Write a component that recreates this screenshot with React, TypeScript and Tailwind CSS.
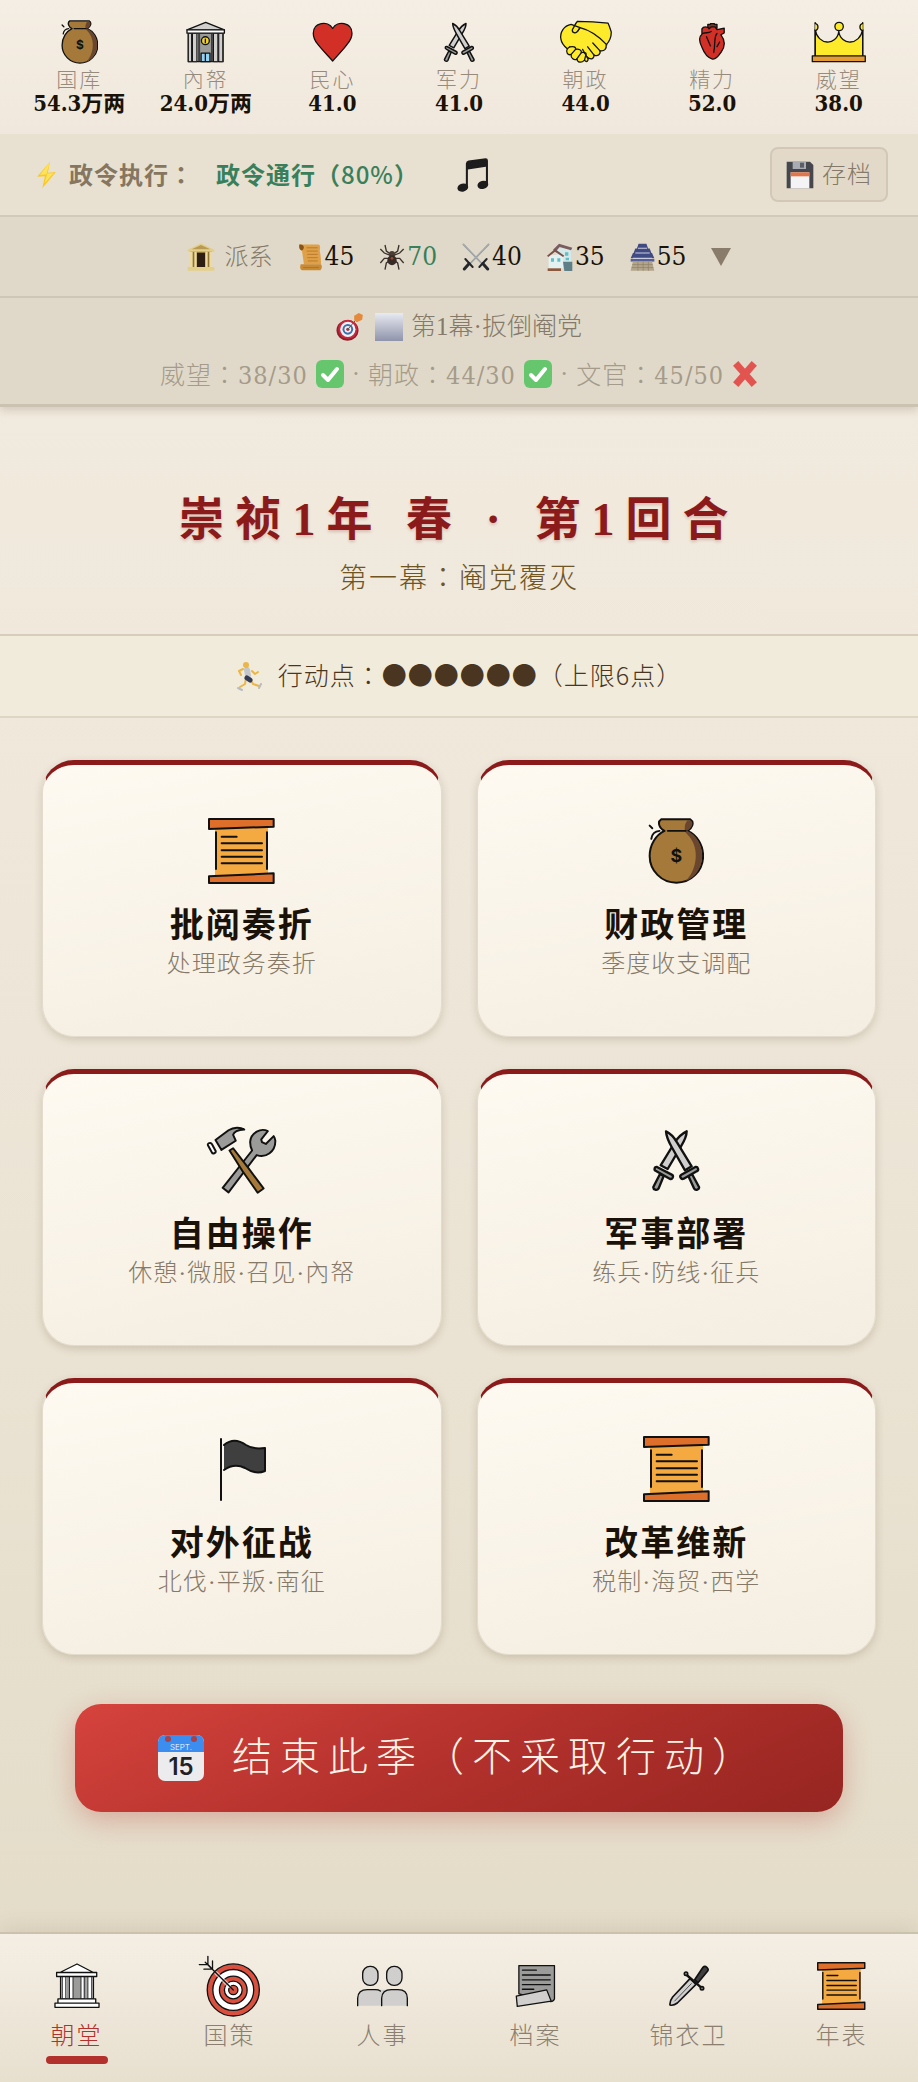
import type { ReactNode } from 'react';
import clsx from 'clsx';

const ink = {
  stroke: '#111',
  strokeWidth: 5,
  strokeLinecap: 'round' as const,
  strokeLinejoin: 'round' as const,
};

function MoneyBag({ className }: { className?: string }) {
  return (
    <svg viewBox="4 3 170 200" className={className} fill="none" {...ink} strokeWidth={6}>
      <path fill="#a57939" d="M54 42C40 36 30 16 44 7H132C146 16 138 34 124 42C152 54 171 84 171 118A81 81 0 0 1 9 118C9 84 28 54 54 42Z" />
      <path stroke="none" fill="#6a462f" d="M124 10H132C144 16 138 34 122 42C150 54 168 84 168 118C168 152 148 184 118 194C150 164 160 104 134 66C128 56 120 50 116 44C114 30 116 18 124 10Z" />
      <path d="M64 42H118M9 26L17 34M14 66C16 52 26 43 39 42" />
      <text x="90" y="137" textAnchor="middle" fontSize="54" fontWeight="700" fontFamily="Inter, sans-serif" fill="#111" stroke="none">$</text>
    </svg>
  );
}

function Bank({ className }: { className?: string }) {
  return (
    <svg viewBox="7 4 120 128" className={className} fill="none" {...ink} strokeWidth={4}>
      <path fill="#9b9b9a" d="M14 40H120V128H14Z" />
      <path fill="#d0cfce" d="M15 41H24V128H15ZM28 41H40V128H28ZM92 41H104V128H92ZM108 41H119V128H108Z" strokeWidth={3} />
      <path fill="#3f3f3f" stroke="none" d="M44 41H50V127H44ZM83 41H89V127H83Z" />
      <path fill="#d0cfce" d="M10 31L67 8L124 31Z" />
      <path fill="#fff" d="M10 31H124V41H10Z" />
      <circle cx="66" cy="64" r="12" fill="#f1d230" />
      <path d="M66 59V70" />
      <path fill="#92d3f5" d="M53 102H80V128H53ZM66 102V128" />
    </svg>
  );
}

function Heart({ className }: { className?: string }) {
  return (
    <svg viewBox="3 4 128 124" className={className} fill="#d22f27" {...ink} strokeWidth={4}>
      <path d="M67 125C52 108 34 90 20 72C10 60 7 50 7 39C7 6 52 -2 67 24C82 -2 127 6 127 39C127 50 123 60 113 72C100 90 82 108 67 125Z" />
    </svg>
  );
}

function CrossedSwords({ className }: { className?: string }) {
  return (
    <svg viewBox="4 6 150 186" className={className} {...ink} strokeWidth={7}>
      <path fill="#d0cfce" d="M111 13C111 26 104 42 94 58L54 126L33 115L74 48C84 32 96 20 111 13Z" />
      <path fill="#9b9b9a" d="M31 141L11 180C10 188 22 192 27 184L42 147Z" />
      <path fill="#9b9b9a" d="M22 120C14 118 12 130 19 132L60 155C68 159 74 147 66 143Z" />
      <path fill="#d0cfce" d="M49 13C64 20 74 32 82 46L126 118L106 130L66 60C56 42 50 30 49 13Z" />
      <path fill="#9b9b9a" d="M127 141L148 180C150 188 138 192 133 184L116 147Z" />
      <path fill="#9b9b9a" d="M137 120C145 118 149 130 141 133L102 155C94 159 88 147 95 143Z" />
    </svg>
  );
}

function Handshake({ className }: { className?: string }) {
  return (
    <svg viewBox="2 2 168 138" className={className} fill="#fcea2b" {...ink} strokeWidth={4}>
      <path d="M40 16C18 20 4 40 8 62C10 76 18 84 28 92C22 104 30 114 40 110C38 122 50 130 58 124C60 136 72 138 82 128C88 138 98 128 90 118C104 130 112 122 112 112C124 118 134 108 130 98C144 102 152 92 150 80C160 70 166 54 166 40C162 28 160 20 156 12C124 8 90 6 60 6C52 14 50 24 44 32C42 42 54 46 60 38L68 26Z" />
      <path d="M60 38L68 26C92 32 126 52 152 80M108 74L130 98M92 86L112 112M76 94L90 118M28 92L36 86M40 110L54 94M58 124L72 104M82 128L86 112" fill="none" />
      <path d="M36 86C46 84 56 86 54 94C64 92 74 96 72 104C82 102 90 106 86 112" fill="none" />
    </svg>
  );
}

function OrganHeart({ className }: { className?: string }) {
  return (
    <svg viewBox="4 2 86 116" className={className} fill="#d22f27" {...ink} strokeWidth={4}>
      <path d="M34 16V6H42V4H54V6H62V18Z" fill="#8c2a22" />
      <path d="M16 20C20 12 34 12 38 20L44 14H56L62 22L84 18V32L74 38C88 56 86 76 74 92C66 104 56 114 48 112C34 108 22 92 16 76C8 60 6 44 16 36Z" />
      <path d="M18 34C28 30 36 34 44 28M30 44L42 72M62 34C52 44 58 60 52 92M70 60L62 74" fill="none" />
    </svg>
  );
}

function Crown({ className }: { className?: string }) {
  return (
    <svg viewBox="0 2 172 130" className={className} fill="#fcea2b" {...ink} strokeWidth={4}>
      <path d="M13 112V28C20 78 80 80 86 34C92 80 152 78 160 28V112Z" />
      <path d="M13 7V112M160 7V112" />
      <circle cx="87" cy="19" r="13" />
      <path d="M13 9A12 12 0 0 1 13 32M160 9A12 12 0 0 0 160 32" />
      <path fill="#e59b33" d="M4 110H168V128H4Z" />
    </svg>
  );
}

function Scroll({ className }: { className?: string }) {
  return (
    <svg viewBox="7 5 200 198" className={className} fill="none" {...ink} strokeWidth={6}>
      <path stroke="none" fill="#f4a941" d="M28 30H187V182H28Z" />
      <path fill="#dd6f2a" d="M10 8H204V31L10 38ZM10 180L204 171V200H10Z" />
      <path d="M31 48V158M184 48V158M48 61H93M48 81H169M48 102H169M48 121H169M48 141H169" />
    </svg>
  );
}

function Tools({ className }: { className?: string }) {
  return (
    <svg viewBox="4 4 222 214" className={className} {...ink} strokeWidth={6}>
      <path fill="#9b9b9a" d="M196 23C176 12 144 26 142 56C142 66 144 74 148 82L58 196L76 210L162 96C190 106 220 86 219 52C218 46 216 40 214 38L190 62L178 56L176 48Z" />
      <path fill="#a57939" d="M79 82L90 75L134 132L183 198L165 211L118 144Z" />
      <path fill="#9b9b9a" d="M36 50L76 20C92 10 112 10 124 18C104 18 92 26 90 34L98 52L54 80Z" />
      <path fill="#fff" d="M13 66C10 60 22 56 25 62L37 84C38 90 28 94 25 88Z" />
    </svg>
  );
}

function Flag({ className }: { className?: string }) {
  return (
    <svg viewBox="0 0 66 66" className={className} fill="#3f3f3f" {...ink} strokeWidth={2}>
      <path d="M12 3V64" />
      <path d="M15 9C22 3 30 4 37 9C43 13 49 13 56 12V35C49 38 42 36 36 32C28 28 22 29 15 34" />
    </svg>
  );
}

function Temple({ className }: { className?: string }) {
  return (
    <svg viewBox="2 2 140 140" className={className} fill="#fff" {...ink} strokeWidth={4}>
      <path d="M22 42H122V112H22Z" />
      <path fill="#9b9b9a" stroke="none" d="M61 43H83V111H61ZM41 43H48V111H41ZM95 43H102V111H95Z" />
      <path d="M27 42V112M38 42V112M49 42V112M60 42V112M84 42V112M94 42V112M105 42V112M117 42V112" strokeWidth={3} />
      <path d="M20 31L72 5L122 31ZM10 31H132V43H10ZM14 111H129V124H14ZM5 124H139V137H5Z" />
    </svg>
  );
}

function Target({ className }: { className?: string }) {
  return (
    <svg viewBox="2 2 192 188" className={className} {...ink} strokeWidth={4}>
      <circle cx="109" cy="108" r="79" fill="#d9503f" />
      <circle cx="109" cy="108" r="62" fill="#fff" />
      <circle cx="109" cy="108" r="42" fill="#d9503f" />
      <circle cx="109" cy="108" r="27" fill="#fff" />
      <circle cx="109" cy="108" r="14" fill="#d9503f" />
      <path fill="none" stroke="#fff" strokeWidth={12} d="M58 58L96 96" opacity={0.6} />
      <path fill="none" d="M24 24L109 108M32 6V31L46 45V20M6 31H31L45 45H20" />
    </svg>
  );
}

function People({ className }: { className?: string }) {
  return (
    <svg viewBox="2 2 158 126" className={className} fill="#d0cfce" {...ink} strokeWidth={4}>
      <rect x="22" y="6" width="46" height="57" rx="22" />
      <rect x="94" y="6" width="46" height="57" rx="22" />
      <path stroke="none" d="M7 124V102Q8 76 36 76H128Q156 76 156 102V124Z" />
      <path fill="none" d="M7 124V102Q8 76 36 76H60Q70 76 75 80M79 124V102Q80 76 108 76H128Q156 76 156 102V124" />
    </svg>
  );
}

function Archive({ className }: { className?: string }) {
  return (
    <svg viewBox="4 4 128 136" className={className} fill="#9b9b9a" {...ink} strokeWidth={4}>
      <path d="M16 9H126V112Q124 120 114 120L16 96Z" />
      <path fill="none" d="M27 23H70M27 38H113M27 53H113M27 68H113M27 82H62" />
      <path fill="#d0cfce" d="M8 103L102 84L116 119L11 135Z" />
    </svg>
  );
}

function Dagger({ className }: { className?: string }) {
  return (
    <svg viewBox="2 4 126 126" className={className} {...ink} strokeWidth={5}>
      <path fill="#d0cfce" d="M68 45L86 62L30 118C22 124 14 126 8 124C7 116 10 108 16 100Z" />
      <path fill="none" strokeWidth={2} d="M72 60L22 112" />
      <path fill="#3f3f3f" d="M82 48L107 11C114 4 126 14 121 22L92 57Z" />
      <path fill="#9b9b9a" strokeWidth={7} d="M58 34L102 72" />
      <circle cx="56" cy="30" r="5" fill="#9b9b9a" />
      <circle cx="104" cy="74" r="5" fill="#9b9b9a" />
    </svg>
  );
}

function Bolt() {
  return (
    <svg viewBox="0 0 64 86" className="h-7 w-[21px]">
      <path fill="#fbc926" d="M43 2L3 48L27 47L19 84L61 34L36 36Z" />
      <path fill="#fde25a" d="M43 2L12 43L34 41L26 68L54 37L32 39Z" />
    </svg>
  );
}

function MusicNote() {
  return (
    <svg viewBox="0 0 94 100" className="h-[34px] w-8" fill="#1d1c1c">
      <path d="M26 16Q27 9 34 7L84 1Q91 1 91 8V80H85V26L32 34V86H26Z" />
      <ellipse cx="17" cy="87" rx="16" ry="12" transform="rotate(-15 17 87)" />
      <ellipse cx="76" cy="79" rx="16" ry="12" transform="rotate(-15 76 79)" />
    </svg>
  );
}

function Floppy() {
  return (
    <svg viewBox="0 0 84 84" className="size-7">
      <path fill="#45474c" d="M2 2H72L82 12V82H2Z" />
      <path fill="#a9adb3" d="M20 2H60V24H20Z" />
      <path fill="#5b5e64" d="M42 5H54V20H42Z" />
      <path fill="#f4f4f6" d="M14 34H70V82H14Z" />
      <path fill="#e2764a" d="M14 34H70V46H14Z" />
    </svg>
  );
}

function Courthouse() {
  return (
    <svg viewBox="0 0 84 84" className="size-7">
      <path fill="#e3cf8b" d="M2 20L42 1L82 20V26H2ZM2 72H82V83H2Z" />
      <path fill="#b89a52" d="M14 19L42 6L70 19Z" />
      <path fill="#8d7336" d="M9 26H75V72H9Z" />
      <path fill="#2d1d12" d="M30 30H54V72H30Z" />
      <path fill="#edda9c" d="M9 26H17V72H9ZM22 26H29V72H22ZM55 26H62V72H55ZM67 26H75V72H67Z" />
    </svg>
  );
}

function Parchment() {
  return (
    <svg viewBox="0 0 76 84" className="h-7 w-[25px]">
      <path fill="#e0a047" d="M4 4Q2 20 12 22L18 64H70Q70 40 66 22Q70 4 62 4Z" />
      <path fill="#8a5418" d="M4 4Q16 2 18 12Q16 22 10 22Q2 18 4 4Z" />
      <path fill="#c98a35" d="M8 64H70Q76 74 68 82H12Q4 80 8 64Z" />
      <path fill="none" stroke="#a56a22" strokeWidth="2" d="M26 14H60M26 24H60M28 34H60M28 44H60M30 54H60M16 74H64" />
    </svg>
  );
}

function Spider() {
  return (
    <svg viewBox="0 0 78 84" className="h-7 w-[26px]">
      <path fill="none" stroke="#3b322b" strokeWidth="4" d="M36 34L22 24L18 6M42 34L56 24L60 6M36 38L16 30L4 18M42 38L62 30L74 18M36 46L16 46L4 60M42 46L62 46L74 60M36 50L22 60L18 80M42 50L56 60L60 80" />
      <ellipse cx="39" cy="34" rx="9" ry="10" fill="#4b3d33" />
      <ellipse cx="39" cy="52" rx="14" ry="15" fill="#362b25" />
      <circle cx="39" cy="46" r="4" fill="#9a4a35" />
    </svg>
  );
}

function Blades() {
  return (
    <svg viewBox="0 0 84 84" className="size-7" fill="none" strokeLinecap="round">
      <path stroke="#8f969b" strokeWidth="5" d="M4 4L58 60M80 4L26 60" />
      <path stroke="#dde2e4" strokeWidth="1" d="M4 4L58 60M80 4L26 60" />
      <path stroke="#23272a" strokeWidth="6" d="M10 48L32 72M74 48L52 72" />
      <path stroke="#23272a" strokeWidth="9" d="M21 62L7 78M63 62L77 78" />
    </svg>
  );
}

function Houses() {
  return (
    <svg viewBox="0 0 78 84" className="h-7 w-[26px]">
      <path fill="#d6e9ea" d="M28 16H72V56H28Z" />
      <path fill="#7a5d60" d="M18 20L36 2L76 14L72 22L38 12L26 26Z" />
      <path fill="#e3f1f1" d="M5 36H48V76H5Z" />
      <path fill="#7b5149" d="M0 38L24 18L52 38L48 42L24 26L4 42Z" />
      <path fill="#61bfc5" d="M12 46H21V56H12ZM31 46H40V56H31ZM54 28H64V38H54ZM56 44H66V52H56Z" />
      <path fill="#8b5a3e" d="M2 76H42V84H2Z" />
      <path fill="#5f7f86" d="M48 56H76V84H52Z" />
    </svg>
  );
}

function Castle() {
  return (
    <svg viewBox="0 0 76 84" className="h-7 w-[25px]">
      <path fill="#404a82" d="M26 2H50L55 16H21ZM16 16H60L65 30H11ZM9 30H67L74 46H2Z" />
      <path fill="#c9cbe0" d="M24 14H52V17H24ZM16 28H60V31H16ZM9 44H67V49H9Z" />
      <path fill="#565f96" d="M2 48H74V56H2Z" />
      <path fill="#b3a58a" d="M9 56H67L74 84H2Z" />
      <path fill="none" stroke="#8d8068" strokeWidth="2" d="M7 65H69M5 74H71M24 56V84M40 56V84M56 56V84" />
    </svg>
  );
}

function Dart() {
  return (
    <svg viewBox="0 0 80 84" className="h-7 w-[27px]">
      <ellipse cx="34" cy="52" rx="33" ry="31" fill="#8f1d2b" />
      <circle cx="35" cy="49" r="29" fill="#c9273a" />
      <circle cx="35" cy="49" r="23" fill="#f2f2f4" />
      <circle cx="35" cy="49" r="16" fill="#3c6fae" />
      <circle cx="35" cy="49" r="10" fill="#f2f2f4" />
      <circle cx="35" cy="49" r="5" fill="#c9273a" />
      <path stroke="#5a5a5a" strokeWidth="3" d="M35 49L58 22" />
      <path fill="#e58a3a" d="M54 8L68 0L80 6L78 20L62 28L54 22Z" />
    </svg>
  );
}

function Check() {
  return (
    <svg viewBox="0 0 28 28" className="size-7 shrink-0">
      <rect width="28" height="28" rx="6" fill="#66c66e" />
      <path fill="none" stroke="#fff" strokeWidth="4" strokeLinecap="round" strokeLinejoin="round" d="M7 15L12 20L21 9" />
    </svg>
  );
}

function Cross() {
  return (
    <svg viewBox="0 0 26 26" className="size-[26px] shrink-0">
      <path stroke="#e2544f" strokeWidth="7" strokeLinecap="square" d="M6 5L20 21M20 5L6 21" />
    </svg>
  );
}

function Runner() {
  return (
    <svg viewBox="0 0 26 30" className="h-[30px] w-[26px]" fill="none" strokeLinecap="round" strokeLinejoin="round">
      <path stroke="#eab64a" strokeWidth="2" d="M7 8L3 10L5 14M16 10L19 13L22 11M10 17L9 23L4 26M14 17L17 23L23 25" />
      <path stroke="#c3c7cc" strokeWidth="6" d="M11 9L12 14" />
      <path stroke="#343c55" strokeWidth="5" d="M11 17L14 19" />
      <path stroke="#b8bcc2" strokeWidth="2" d="M2 27L6 29M23 27L25 23" />
      <circle cx="10" cy="4" r="3" fill="#eab64a" />
    </svg>
  );
}

function Calendar() {
  return (
    <svg viewBox="0 0 46 46" className="size-[46px] tracking-normal">
      <rect width="46" height="46" rx="7" fill="#ececee" />
      <path fill="#3b8df0" d="M0 17V7A7 7 0 0 1 7 0H39A7 7 0 0 1 46 7V17Z" />
      <circle cx="10" cy="4" r="3" fill="#a8414a" />
      <circle cx="36" cy="4" r="3" fill="#a8414a" />
      <text x="23" y="15" textAnchor="middle" fontSize="8" fontFamily="Inter, sans-serif" fill="#fff">SEPT.</text>
      <text x="23" y="40" textAnchor="middle" fontSize="24" fontWeight="600" fontFamily="Inter, sans-serif" fill="#222">15</text>
    </svg>
  );
}

const stats = [
  { label: '国库', value: '54.3万两', icon: <MoneyBag className="h-11 w-auto" /> },
  { label: '內帑', value: '24.0万两', icon: <Bank className="h-[42px] w-auto" /> },
  { label: '民心', value: '41.0', icon: <Heart className="h-10 w-auto" /> },
  { label: '军力', value: '41.0', icon: <CrossedSwords className="h-10 w-auto" /> },
  { label: '朝政', value: '44.0', icon: <Handshake className="h-11 w-auto" /> },
  { label: '精力', value: '52.0', icon: <OrganHeart className="h-[38px] w-auto" /> },
  { label: '威望', value: '38.0', icon: <Crown className="h-[42px] w-auto" /> },
];

const factions = [
  { id: 'civil', value: 45, icon: <Parchment /> },
  { id: 'eunuch', value: 70, icon: <Spider />, high: true },
  { id: 'army', value: 40, icon: <Blades /> },
  { id: 'gentry', value: 35, icon: <Houses /> },
  { id: 'royal', value: 55, icon: <Castle /> },
];

const goals = [
  { label: '威望', value: '38/30', done: true },
  { label: '朝政', value: '44/30', done: true },
  { label: '文官', value: '45/50', done: false },
];

const actions = [
  { title: '批阅奏折', desc: '处理政务奏折', icon: <Scroll className="h-[66px] w-auto" /> },
  { title: '财政管理', desc: '季度收支调配', icon: <MoneyBag className="h-[66px] w-auto" /> },
  { title: '自由操作', desc: '休憩·微服·召见·內帑', icon: <Tools className="h-[70px] w-auto" /> },
  { title: '军事部署', desc: '练兵·防线·征兵', icon: <CrossedSwords className="h-[62px] w-auto" /> },
  { title: '对外征战', desc: '北伐·平叛·南征', icon: <Flag className="h-[66px] w-auto" /> },
  { title: '改革维新', desc: '税制·海贸·西学', icon: <Scroll className="h-[66px] w-auto" /> },
];

const tabs = [
  { label: '朝堂', icon: <Temple className="h-[46px] w-auto" />, active: true },
  { label: '国策', icon: <Target className="h-[62px] w-auto" /> },
  { label: '人事', icon: <People className="h-[42px] w-auto" /> },
  { label: '档案', icon: <Archive className="h-[44px] w-auto" /> },
  { label: '锦衣卫', icon: <Dagger className="h-[42px] w-auto" /> },
  { label: '年表', icon: <Scroll className="h-12 w-auto" /> },
];

function Num({ children }: { children: ReactNode }) {
  return <span className="font-['DejaVu_Serif_Condensed','DejaVu_Serif','Noto_Sans_CJK_SC',serif]">{children}</span>;
}

// full-width colon centred in its cell
function Colon() {
  return <span className="font-['Noto_Sans_CJK_TC',sans-serif]">：</span>;
}

export default function App() {
  return (
    <div className="flex min-h-screen flex-col bg-linear-to-b from-[#f3ece1] via-[#ede6d8] to-[#e3dbc7] font-['Liberation_Serif','Noto_Sans_CJK_SC',serif] font-light text-[#1a1208]">
      <header className="relative shadow-[0_3px_8px_rgba(90,70,40,0.2)]">
        {/* Resources */}
        <dl className="grid grid-cols-7 bg-linear-to-b from-[#f5eee4] to-[#f0e8dc] px-4 py-5">
          {stats.map((stat) => (
            <div key={stat.label} className="flex flex-col items-center">
              <div className="flex h-11 items-center">{stat.icon}</div>
              <dt className="mt-1 h-6 text-[21px] leading-6 tracking-[2px] text-[#978b7c]">{stat.label}</dt>
              <dd className="h-[22px] font-['DejaVu_Serif_Condensed','DejaVu_Serif','Noto_Sans_CJK_SC',serif] text-[22px] leading-[22px] font-bold whitespace-nowrap">
                {stat.value}
              </dd>
            </div>
          ))}
        </dl>

        {/* Decree status */}
        <div className="flex items-center border-b-2 border-[#d2c9b8] bg-[#e8e1d1] py-[13px] pr-[30px] pl-9 text-2xl font-bold tracking-[1px]">
          <Bolt />
          <span className="ml-3 text-[#86765f]">
            政令执行
            <Colon />
          </span>
          <span className="ml-[22px] text-[#3a7f5b]">
            政令通行（<span className="font-['Noto_Sans_CJK_SC',sans-serif] font-medium">80%</span>）
          </span>
          <button type="button" aria-label="音乐" className="ml-[38px]">
            <MusicNote />
          </button>
          <button
            type="button"
            className="ml-auto flex h-[55px] items-center gap-2 rounded-lg border-2 border-[#d3c8b7] bg-[#e3d9c9] px-3.5 font-light text-[#85796a]"
          >
            <Floppy />
            存档
          </button>
        </div>

        {/* Factions */}
        <div className="flex h-[81px] items-center justify-center gap-[25px] border-b-2 border-[#cfc6b5] bg-[#e0d9c9]">
          <span className="flex items-center gap-2.5 text-2xl text-[#85796a]">
            <Courthouse />
            派系
          </span>
          {factions.map((faction) => (
            <span
              key={faction.id}
              className={clsx('flex items-center gap-[2px] text-[26px] font-medium', faction.high && 'text-[#37805a]')}
            >
              {faction.icon}
              <Num>{faction.value}</Num>
            </span>
          ))}
          <button type="button" aria-label="展开派系" className="text-[#8a7c6a]">
            <svg viewBox="0 0 20 18" className="h-[18px] w-5" fill="currentColor">
              <path d="M0 0H20L10 18Z" />
            </svg>
          </button>
        </div>

        {/* Act goals */}
        <div className="flex flex-col items-center gap-[7px] border-b-3 border-[#cbc2b1] bg-[#e0d9c9] pt-[9px] pb-2.5 text-[25px] leading-10 whitespace-nowrap">
          <p className="flex h-10 items-center text-[#85796a]">
            <Dart />
            <span className="mr-2 ml-3 h-7 w-7 bg-linear-to-b from-[#e9ebf1] to-[#8f94ab]" />
            第1幕·扳倒阉党
          </p>
          <p className="flex h-10 items-center gap-2 text-[#a59b8a]">
            {goals.map((goal, i) => (
              <span key={goal.label} className="flex items-center gap-2">
                {i > 0 && <span>·</span>}
                <span className="tracking-[1px]">
                  {goal.label}
                  <Colon />
                  <Num>{goal.value}</Num>
                </span>
                {goal.done ? <Check /> : <Cross />}
              </span>
            ))}
          </p>
        </div>
      </header>

      <main className="flex flex-1 flex-col">
        <section className="border-b-2 border-[#d6cdbc] pt-[85px] pb-9 text-center">
          <h1 className="text-[46px] leading-[56px] font-bold tracking-[11px] text-[#8b1a1a] [text-shadow:0_2px_3px_rgba(139,26,26,0.2)]">
            崇祯1年 春 · 第1回合
          </h1>
          <p className="mt-2 h-[42px] text-[28px] leading-10 tracking-[2px] text-[#6f5524]">
            第一幕
            <Colon />
            阉党覆灭
          </p>
        </section>

        <div className="flex h-[82px] items-center justify-center border-b-2 border-[#ded6c5] bg-[#f1ebdc] text-[25px] tracking-[1px] text-[#4a3520]">
          <Runner />
          <span className="ml-4">
            行动点
            <Colon />
            <span className="font-['Noto_Sans_CJK_SC',sans-serif]">●●●●●●（上限6点）</span>
          </span>
        </div>

        <div className="grid grid-cols-2 gap-x-[35px] gap-y-8 px-[42px] pt-[42px]">
          {actions.map((action) => (
            <button
              key={action.title}
              type="button"
              className="flex flex-col items-center rounded-[32px] border border-t-5 border-[#e3dbcb] border-t-[#8b1a1a] bg-linear-170 from-[#fefaf1] to-[#f4ede1] pt-[53px] pb-14 shadow-[0_3px_8px_rgba(90,70,40,0.2)]"
            >
              <span className="flex h-[66px] items-center">{action.icon}</span>
              <span className="mt-5 text-[34px] leading-[44px] font-bold tracking-[2px]">{action.title}</span>
              <span className="text-2xl leading-8 tracking-[1px] text-[#857969]">{action.desc}</span>
            </button>
          ))}
        </div>

        <button
          type="button"
          className="mx-[75px] mt-[49px] mb-[118px] flex h-[108px] items-center justify-center gap-7 rounded-[26px] bg-linear-155 from-[#d6433d] via-[#b3312c] to-[#962521] text-[40px] tracking-[8px] whitespace-nowrap text-[#fdf3e7] shadow-[0_8px_28px_rgba(179,49,44,0.3)]"
        >
          <Calendar />
          结束此季（不采取行动）
        </button>
      </main>

      <nav className="sticky bottom-0 grid grid-cols-6 border-t-2 border-[#cbc2ae] bg-linear-to-b from-[#f5eee4] to-[#e7e0cf] pt-5 pb-[18px] shadow-[0_-4px_20px_rgba(90,70,40,0.12)]">
        {tabs.map((tab) => (
          <a
            key={tab.label}
            href="#"
            aria-current={tab.active ? 'page' : undefined}
            className={clsx('flex flex-col items-center', tab.active ? 'text-[#b3312c]' : 'text-[#8b7f70]')}
          >
            <span className="flex h-16 items-center">{tab.icon}</span>
            <span className="text-2xl leading-9 tracking-[2px]">{tab.label}</span>
            <span className={clsx('mt-0.5 h-2 w-[62px] rounded-full', tab.active && 'bg-[#b3312c]')} />
          </a>
        ))}
      </nav>
    </div>
  );
}
